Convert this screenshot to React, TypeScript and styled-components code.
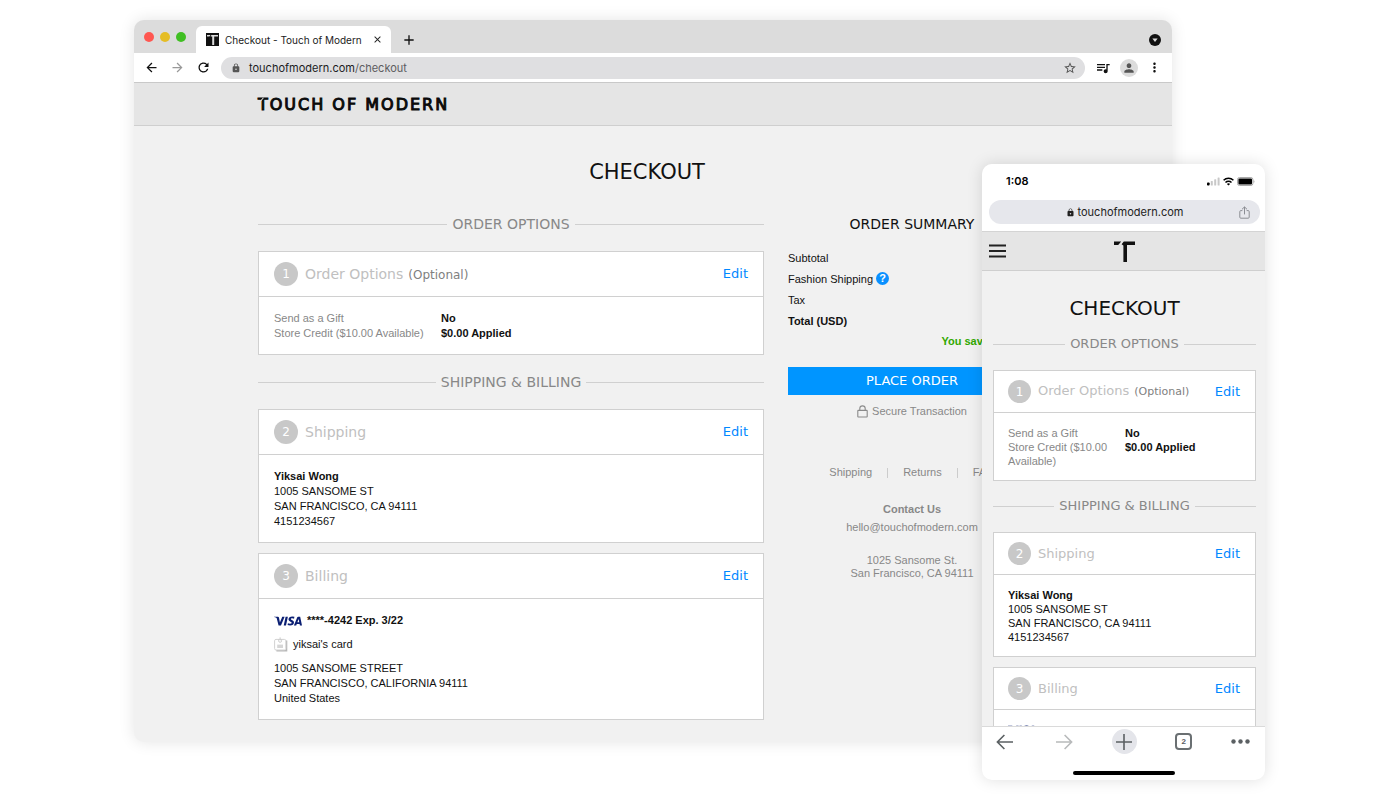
import React from "react";
import styled, { createGlobalStyle } from "styled-components";
import {
  MdAdd,
  MdArrowBack,
  MdArrowForward,
  MdClose,
  MdLock,
  MdMoreVert,
  MdPerson,
  MdQueueMusic,
  MdRefresh,
  MdStarBorder,
} from "react-icons/md";
import { SiVisa } from "react-icons/si";

const sans = `"Liberation Sans", Arial, sans-serif`;
const display = `"DejaVu Sans", Verdana, sans-serif`;
const system = `Inter, Roboto, sans-serif`;
const line = "#d0d0d0";
const blue = "#0088ff";

const GlobalStyle = createGlobalStyle`
  *, *::before, *::after { box-sizing: border-box; }
  body { margin: 0; background: #fff; color: #111; font-family: ${sans}; font-size: 11px; }
  button { border: 0; padding: 0; margin: 0; background: none; font: inherit; color: inherit; cursor: pointer; }
  a { color: inherit; text-decoration: none; }
  h1, h2, h3, p, dl, dd, dt { margin: 0; font-weight: inherit; }
  svg { display: block; flex: none; }
`;

/* ---------- stage ---------- */

const Stage = styled.main`
  position: relative;
  padding: 20px 228px 59px 134px;
`;

const BrowserWindow = styled.section`
  border-radius: 10px;
  overflow: hidden;
  background: #f1f1f1;
  box-shadow: 0 0 16px rgba(0, 0, 0, 0.11);
`;

const PhoneWindow = styled.section`
  position: absolute;
  top: 164px;
  right: 135px;
  width: 283px;
  height: 616px;
  display: flex;
  flex-direction: column;
  border-radius: 10px;
  overflow: hidden;
  background: #f1f1f1;
  box-shadow: 0 0 16px rgba(0, 0, 0, 0.13);
`;

/* ---------- desktop browser chrome ---------- */

const TabStrip = styled.div`
  display: flex;
  align-items: flex-end;
  height: 33px;
  padding: 0 11px 0 10px;
  background: #dcdcdc;
`;

const Lights = styled.div`
  display: flex;
  gap: 6px;
  align-self: center;
  width: 52px;
`;

const Light = styled.button<{ $color: string }>`
  width: 10px;
  height: 10px;
  border-radius: 50%;
  background: ${(p) => p.$color};
`;

const Tab = styled.div`
  display: flex;
  align-items: center;
  width: 195px;
  height: 27px;
  padding: 0 8px 0 10px;
  border-radius: 6px 6px 0 0;
  background: #fff;
  font: 10px/16px ${system};
  color: #222;
`;

const TabTitle = styled.span`
  flex: 1;
  margin-left: 6px;
  white-space: nowrap;
`;

const NewTab = styled.button`
  margin: 0 auto 5px 10px;
`;

const TabMenu = styled.button`
  margin-bottom: 7px;
`;

const Toolbar = styled.div`
  display: flex;
  align-items: center;
  gap: 10px;
  height: 30px;
  padding: 0 10px;
  background: #fff;
  border-bottom: 1px solid #c9c9c9;
  color: #111;
`;

const ToolGroup = styled.div<{ $gap: number }>`
  display: flex;
  align-items: center;
  gap: ${(p) => p.$gap}px;
`;

const AddressBar = styled.div`
  display: flex;
  align-items: center;
  flex: 1;
  height: 22px;
  padding: 0 8px 0 10px;
  border-radius: 11px;
  background: #dfdfe1;
  color: #555;
`;

const AddressText = styled.div`
  flex: 1;
  margin-left: 8px;
  font: 11px/16px ${system};
  color: #5c5c60;

  b {
    font-weight: 400;
    color: #1c1c1e;
  }
`;

const Avatar = styled.button`
  display: grid;
  place-items: center;
  width: 18px;
  height: 18px;
  border-radius: 50%;
  background: #dcdcdc;
  color: #555;
`;

/* ---------- shop header and page ---------- */

const ShopHeader = styled.header`
  display: flex;
  align-items: center;
  height: 43px;
  padding: 2px 124px 0;
  background: #e5e5e5;
  border-bottom: 1px solid #cfcfcf;
`;

const Wordmark = styled.a`
  position: relative;
  font: 16px/20px ${display};
  letter-spacing: 2px;
  color: #0a0a0a;
  -webkit-text-stroke: 1px #0a0a0a;

  &::after {
    content: "";
    position: absolute;
    left: 3px;
    top: 2px;
    width: 1px;
    height: 6px;
    background: #e5e5e5;
    transform: rotate(40deg);
  }
`;

const Page = styled.div`
  padding: 34px 136px 22px 124px;
`;

const PageTitle = styled.h1<{ $compact?: boolean }>`
  margin-bottom: ${(p) => (p.$compact ? 14 : 30)}px;
  font: ${(p) => (p.$compact ? 20 : 21)}px/24px ${display};
  text-align: center;
  color: #111;
`;

const Columns = styled.div`
  display: grid;
  grid-template-columns: minmax(0, 1fr) 248px;
  gap: 24px;
`;

const Divider = styled.h2<{ $compact?: boolean }>`
  display: flex;
  align-items: center;
  gap: 5px;
  margin: ${(p) => (p.$compact ? "15px 0 16px" : "17px 0")};
  font: ${(p) => (p.$compact ? 13 : 14)}px/20px ${display};
  color: #888;
  white-space: nowrap;

  &:first-child {
    margin-top: 0;
  }

  &::before,
  &::after {
    content: "";
    flex: 1;
    height: 1px;
    background: ${line};
  }
`;

const Card = styled.article<{ $compact?: boolean }>`
  border: 1px solid ${line};
  background: #fff;

  & + & {
    margin-top: ${(p) => (p.$compact ? 10 : 9)}px;
  }
`;

const CardHead = styled.div<{ $compact?: boolean }>`
  display: flex;
  align-items: center;
  height: ${(p) => (p.$compact ? 42 : 45)}px;
  padding: 0 15px 0 ${(p) => (p.$compact ? 14 : 15)}px;
  border-bottom: 1px solid ${line};
  font: 14px/20px ${display};
  color: #c0c0c0;
`;

const Step = styled.span<{ $compact?: boolean }>`
  display: grid;
  place-items: center;
  width: ${(p) => (p.$compact ? 23 : 24)}px;
  height: ${(p) => (p.$compact ? 23 : 24)}px;
  margin-right: 7px;
  border-radius: 50%;
  background: #c8c8c8;
  color: #fff;
  font-size: 12px;
`;

const CardTitle = styled.h3<{ $compact?: boolean }>`
  font-size: ${(p) => (p.$compact ? 13 : 14)}px;

  small {
    margin-left: 5px;
    font-size: ${(p) => (p.$compact ? 11 : 12)}px;
    color: #808080;
  }
`;

const EditButton = styled.button`
  margin-left: auto;
  font: 13px/20px ${display};
  color: ${blue};
`;

const CardBody = styled.div<{ $compact?: boolean }>`
  padding: ${(p) => (p.$compact ? "13px 14px 12px" : "14px 15px 13px")};
  line-height: ${(p) => (p.$compact ? 14 : 15)}px;
  color: #111;
`;

const Options = styled.dl<{ $compact?: boolean }>`
  display: grid;
  grid-template-columns: ${(p) => (p.$compact ? "107px" : "157px")} 1fr;
  column-gap: 10px;

  dt {
    color: #888;
  }

  dd {
    font-weight: 700;
  }
`;

const CardLine = styled.p<{ $strong?: boolean }>`
  display: flex;
  align-items: center;
  gap: 5px;
  margin-bottom: 9px;
  font-weight: ${(p) => (p.$strong ? 700 : 400)};
`;

const VisaMark = styled(SiVisa)`
  width: 28px;
  height: 10px;
  color: #0b1f73;
`;

/* ---------- summary ---------- */

const Summary = styled.aside`
  text-align: center;
  color: #888;
`;

const SummaryTitle = styled.h2`
  margin-bottom: 13px;
  font: 14px/20px ${display};
  color: #111;
`;

const SummaryRow = styled.p<{ $strong?: boolean }>`
  display: flex;
  align-items: center;
  gap: 3px;
  height: 21px;
  color: #111;
  font-weight: ${(p) => (p.$strong ? 700 : 400)};
`;

const Help = styled.button`
  display: grid;
  place-items: center;
  width: 13px;
  height: 13px;
  border-radius: 50%;
  background: #0a90ff;
  color: #fff;
  font-size: 11px;
  font-weight: 700;
  line-height: 13px;
`;

const Saved = styled.p`
  margin-bottom: 16px;
  font-weight: 700;
  line-height: 20px;
  text-align: right;
  color: #32a800;
`;

const PlaceOrder = styled.button`
  width: 100%;
  height: 28px;
  background: #0095ff;
  color: #fff;
  font: 13px/20px ${display};
`;

const Secure = styled.p`
  display: flex;
  align-items: center;
  justify-content: center;
  gap: 4px;
  margin: 8px 0 46px;
  line-height: 16px;
`;

const FooterLinks = styled.nav`
  display: flex;
  justify-content: center;
  margin-bottom: 20px;
  line-height: 15px;

  a + a {
    margin-left: 15px;
    padding-left: 16px;
    background: linear-gradient(#ccc, #ccc) 0 60% / 1px 10px no-repeat;
  }
`;

const Contact = styled.p`
  margin-bottom: 18px;
  line-height: 18px;

  a {
    display: block;
  }
`;

const Address = styled.p`
  line-height: 13px;
`;

/* ---------- phone chrome ---------- */

const StatusBar = styled.div`
  display: flex;
  align-items: center;
  justify-content: space-between;
  height: 36px;
  padding: 0 10px 2px 24px;
  background: #fff;
  font: 600 11px/16px ${system};
  color: #000;
`;

const StatusIcons = styled.div`
  display: flex;
  align-items: center;
  gap: 3px;
`;

const PhoneAddress = styled.div`
  padding: 0 5px 7px 7px;
  background: #fff;
  border-bottom: 1px solid #d4d4d4;
`;

const PhonePill = styled.div`
  display: grid;
  grid-template-columns: 1fr auto 1fr;
  align-items: center;
  height: 24px;
  padding: 0 10px;
  border-radius: 12px;
  background: #e6e7ec;
  font: 11px/16px ${system};
  color: #222;
`;

const PillText = styled.span`
  grid-column: 2;
  display: flex;
  align-items: center;
  gap: 3px;
`;

const ShareButton = styled.button`
  justify-self: end;
`;

const PhoneHeader = styled.header`
  display: grid;
  grid-template-columns: 1fr auto 1fr;
  align-items: center;
  height: 39px;
  flex: none;
  padding: 0 6px 0 7px;
  background: #e5e5e5;
  border-bottom: 1px solid #cfcfcf;
`;

const PhonePage = styled.div`
  flex: 1;
  min-height: 0;
  overflow: hidden;
  padding: 25px 9px 0 11px;
`;

const PhoneBar = styled.nav`
  flex: none;
  padding: 2px 0 5px;
  background: #fff;
  border-top: 1px solid #dadada;
`;

const PhoneButtons = styled.div`
  display: flex;
  justify-content: space-between;
  padding: 0 16px 0 10px;
  margin-bottom: 17px;
  color: #5b6063;
`;

const PhoneButton = styled.button<{ $filled?: boolean; $narrow?: boolean }>`
  display: grid;
  place-items: center;
  width: ${(p) => (p.$narrow ? 18 : 25)}px;
  height: 25px;
  border-radius: 50%;
  background: ${(p) => (p.$filled ? "#e4e5ea" : "none")};
`;

const HomeIndicator = styled.div`
  width: 102px;
  height: 4px;
  margin: 0 auto;
  border-radius: 2px;
  background: #000;
`;

/* ---------- drawings ---------- */

const Favicon = () => (
  <svg width="13" height="13" viewBox="0 0 13 13" aria-hidden="true">
    <rect width="13" height="13" fill="#111" />
    <path d="M1 2h3.6L3.4 3.6H1zM5.4 2H12v1.6H8.2V12H6.2V3.6H4.6z" fill="#ddd" />
  </svg>
);

const TLogo = () => (
  <svg width="21" height="21" viewBox="0 0 21 21" fill="#111" aria-hidden="true">
    <path d="M0 .6h7.2L4.2 3.9H0zM9.8 .6H21v3.3h-8V21H9.4V4.4L7.600 3.200z" />
  </svg>
);

const TabMenuIcon = () => (
  <svg width="12" height="12" viewBox="0 0 12 12" aria-hidden="true">
    <circle cx="6" cy="6" r="6" fill="#111" />
    <path d="M3.4 4.4h5.2L6 8z" fill="#ddd" />
  </svg>
);

const PadlockOutline = () => (
  <svg width="11" height="13" viewBox="0 0 11 13" fill="none" stroke="#8a8a8a" strokeWidth="1.1" aria-hidden="true">
    <rect x="0.8" y="5.4" width="9.4" height="6.6" rx="0.5" />
    <path d="M2.8 5.4V3.6a2.7 2.7 0 0 1 5.4 0v1.8" />
  </svg>
);

const BadgeIcon = () => (
  <svg width="14" height="15" viewBox="0 0 14 15" fill="none" aria-hidden="true">
    <path d="M12.6 3.4v10.4H2.4" stroke="#b8b8b8" strokeWidth="1.4" />
    <rect x="0.6" y="2.4" width="11.2" height="10.6" rx="1.4" fill="#fff" stroke="#d2d2d2" />
    <path d="M4.6 2.4v1.4a1.500 1.500 0 0 0 3 0V2.400" stroke="#c8c8c8" strokeWidth="0.9" />
    <path d="M6.100 0.400v3" stroke="#c8c8c8" />
    <rect x="3.200" y="7.600" width="5.800" height="3.400" fill="#d6d6d6" />
  </svg>
);

const SignalIcon = () => (
  <svg width="13" height="9" viewBox="0 0 13 9" aria-hidden="true">
    <rect x="0" y="5.5" width="2.6" height="3" rx="0.8" fill="#000" />
    <rect x="3.8" y="4" width="2" height="4.5" rx="0.6" fill="#c8c8c8" />
    <rect x="7.2" y="2.2" width="2" height="6.3" rx="0.6" fill="#c8c8c8" />
    <rect x="10.6" y="0.4" width="2" height="8.1" rx="0.6" fill="#c8c8c8" />
  </svg>
);

const WifiIcon = () => (
  <svg width="11" height="9" viewBox="0 0 11 9" fill="none" stroke="#000" strokeWidth="1.5" aria-hidden="true">
    <path d="M0.6 3.3a7 7 0 0 1 9.8 0M2.5 5.4a4.2 4.2 0 0 1 6 0" />
    <path d="M5.5 8.6 3.9 7a2.3 2.3 0 0 1 3.2 0z" fill="#000" stroke="none" />
  </svg>
);

const BatteryIcon = () => (
  <svg width="18" height="9" viewBox="0 0 18 9" aria-hidden="true">
    <rect x="0.5" y="0.5" width="15.4" height="8" rx="2" fill="none" stroke="#aaa" />
    <rect x="1.4" y="1.4" width="13.6" height="6.2" rx="1" fill="#000" />
    <path d="M16.7 3.2v2.6c.8-.2 1-2.2 0-2.6z" fill="#888" />
  </svg>
);

const ShareIcon = () => (
  <svg width="11" height="13" viewBox="0 0 11 13" fill="none" stroke="#8b8d93" aria-hidden="true">
    <path d="M3.4 4.6H1.8a1 1 0 0 0-1 1v5.6a1 1 0 0 0 1 1h7.4a1 1 0 0 0 1-1V5.6a1 1 0 0 0-1-1H7.6M5.5 8.4V1M3 3.3 5.5.9 8 3.3" />
  </svg>
);

const MenuIcon = () => (
  <svg width="17" height="14" viewBox="0 0 17 14" stroke="#222" strokeWidth="2" aria-hidden="true">
    <path d="M0 1.5h17M0 7h17M0 12.5h17" />
  </svg>
);

const LongArrow = ({ forward }: { forward?: boolean }) => (
  <svg width="18" height="16" viewBox="0 0 18 16" fill="none" stroke={forward ? "#b8babb" : "#5b6063"} strokeWidth="1.6" aria-hidden="true">
    <path d={forward ? "M1 8h15.4M9.6 1l7 7-7 7" : "M17 8H1.6M8.4 1l-7 7 7 7"} />
  </svg>
);

const PlusIcon = () => (
  <svg width="16" height="16" viewBox="0 0 16 16" stroke="#5b6063" strokeWidth="1.6" aria-hidden="true">
    <path d="M8 0v16M0 8h16" />
  </svg>
);

const TabCount = styled.span`
  display: grid;
  place-items: center;
  width: 17px;
  height: 17px;
  border: 2px solid #6a6f72;
  border-radius: 4px;
  font: 700 8px/12px ${sans};
`;

const DotsIcon = () => (
  <svg width="19" height="5" viewBox="0 0 19 5" fill="#5b6063" aria-hidden="true">
    <circle cx="2.5" cy="2.5" r="2.2" />
    <circle cx="9.5" cy="2.5" r="2.2" />
    <circle cx="16.5" cy="2.5" r="2.2" />
  </svg>
);

/* ---------- shared checkout steps ---------- */

type StepCardProps = {
  step: number;
  title: string;
  note?: string;
  compact?: boolean;
  children: React.ReactNode;
};

const StepCard = ({ step, title, note, compact, children }: StepCardProps) => (
  <Card $compact={compact}>
    <CardHead $compact={compact}>
      <Step $compact={compact}>{step}</Step>
      <CardTitle $compact={compact}>
        {title}
        {note && <small>{note}</small>}
      </CardTitle>
      <EditButton aria-label={`Edit ${title}`}>Edit</EditButton>
    </CardHead>
    <CardBody $compact={compact}>{children}</CardBody>
  </Card>
);

const CheckoutSteps = ({ compact }: { compact?: boolean }) => (
  <div>
    <Divider $compact={compact}>ORDER OPTIONS</Divider>
    <StepCard step={1} title="Order Options" note="(Optional)" compact={compact}>
      <Options $compact={compact}>
        <dt>Send as a Gift</dt>
        <dd>No</dd>
        <dt>Store Credit ($10.00 Available)</dt>
        <dd>$0.00 Applied</dd>
      </Options>
    </StepCard>
    <Divider $compact={compact}>SHIPPING &amp; BILLING</Divider>
    <StepCard step={2} title="Shipping" compact={compact}>
      <strong>Yiksai Wong</strong>
      <p>1005 SANSOME ST</p>
      <p>SAN FRANCISCO, CA 94111</p>
      <p>4151234567</p>
    </StepCard>
    <StepCard step={3} title="Billing" compact={compact}>
      <CardLine $strong>
        <VisaMark viewBox="0 8 24 8" preserveAspectRatio="xMidYMid meet" aria-label="Visa" />
        ****-4242 Exp. 3/22
      </CardLine>
      {!compact && (
        <>
          <CardLine>
            <BadgeIcon />
            yiksai's card
          </CardLine>
          <p>1005 SANSOME STREET</p>
          <p>SAN FRANCISCO, CALIFORNIA 94111</p>
          <p>United States</p>
        </>
      )}
    </StepCard>
  </div>
);

const OrderSummary = () => (
  <Summary>
    <SummaryTitle>ORDER SUMMARY</SummaryTitle>
    <SummaryRow>Subtotal</SummaryRow>
    <SummaryRow>
      Fashion Shipping <Help aria-label="About fashion shipping">?</Help>
    </SummaryRow>
    <SummaryRow>Tax</SummaryRow>
    <SummaryRow $strong>Total (USD)</SummaryRow>
    <Saved>You saved $20.00!</Saved>
    <PlaceOrder>PLACE ORDER</PlaceOrder>
    <Secure>
      <PadlockOutline />
      Secure Transaction
    </Secure>
    <FooterLinks>
      <a href="#shipping">Shipping</a>
      <a href="#returns">Returns</a>
      <a href="#faq">FAQ</a>
    </FooterLinks>
    <Contact>
      <strong>Contact Us</strong>
      <a href="mailto:hello@touchofmodern.com">hello@touchofmodern.com</a>
    </Contact>
    <Address>
      1025 Sansome St.
      <br />
      San Francisco, CA 94111
    </Address>
  </Summary>
);

const Desktop = () => (
  <BrowserWindow>
    <TabStrip>
      <Lights>
        <Light $color="#ff5751" aria-label="Close window" />
        <Light $color="#e5bd25" aria-label="Minimise window" />
        <Light $color="#40bf23" aria-label="Zoom window" />
      </Lights>
      <Tab>
        <Favicon />
        <TabTitle>Checkout - Touch of Modern</TabTitle>
        <button aria-label="Close tab">
          <MdClose size={11} />
        </button>
      </Tab>
      <NewTab aria-label="New tab">
        <MdAdd size={16} />
      </NewTab>
      <TabMenu aria-label="Search tabs">
        <TabMenuIcon />
      </TabMenu>
    </TabStrip>
    <Toolbar>
      <ToolGroup $gap={11}>
        <button aria-label="Back">
          <MdArrowBack size={15} />
        </button>
        <button aria-label="Forward">
          <MdArrowForward size={15} color="#999" />
        </button>
        <button aria-label="Reload">
          <MdRefresh size={15} />
        </button>
      </ToolGroup>
      <AddressBar>
        <MdLock size={10} />
        <AddressText>
          <b>touchofmodern.com</b>/checkout
        </AddressText>
        <button aria-label="Bookmark">
          <MdStarBorder size={14} />
        </button>
      </AddressBar>
      <ToolGroup $gap={9}>
        <button aria-label="Media">
          <MdQueueMusic size={16} />
        </button>
        <Avatar aria-label="Profile">
          <MdPerson size={14} />
        </Avatar>
        <button aria-label="More">
          <MdMoreVert size={15} />
        </button>
      </ToolGroup>
    </Toolbar>
    <ShopHeader>
      <Wordmark href="#home">TOUCH OF MODERN</Wordmark>
    </ShopHeader>
    <Page>
      <PageTitle>CHECKOUT</PageTitle>
      <Columns>
        <CheckoutSteps />
        <OrderSummary />
      </Columns>
    </Page>
  </BrowserWindow>
);

const Phone = () => (
  <PhoneWindow>
    <StatusBar>
      <span>1:08</span>
      <StatusIcons>
        <SignalIcon />
        <WifiIcon />
        <BatteryIcon />
      </StatusIcons>
    </StatusBar>
    <PhoneAddress>
      <PhonePill>
        <PillText>
          <MdLock size={9} />
          touchofmodern.com
        </PillText>
        <ShareButton aria-label="Share">
          <ShareIcon />
        </ShareButton>
      </PhonePill>
    </PhoneAddress>
    <PhoneHeader>
      <button aria-label="Menu">
        <MenuIcon />
      </button>
      <TLogo />
    </PhoneHeader>
    <PhonePage>
      <PageTitle $compact>CHECKOUT</PageTitle>
      <CheckoutSteps compact />
    </PhonePage>
    <PhoneBar>
      <PhoneButtons>
        <PhoneButton aria-label="Back">
          <LongArrow />
        </PhoneButton>
        <PhoneButton aria-label="Forward">
          <LongArrow forward />
        </PhoneButton>
        <PhoneButton $filled aria-label="New tab">
          <PlusIcon />
        </PhoneButton>
        <PhoneButton aria-label="Tabs">
          <TabCount>2</TabCount>
        </PhoneButton>
        <PhoneButton $narrow aria-label="More">
          <DotsIcon />
        </PhoneButton>
      </PhoneButtons>
      <HomeIndicator />
    </PhoneBar>
  </PhoneWindow>
);

export default function App() {
  return (
    <>
      <GlobalStyle />
      <Stage>
        <Desktop />
        <Phone />
      </Stage>
    </>
  );
}
